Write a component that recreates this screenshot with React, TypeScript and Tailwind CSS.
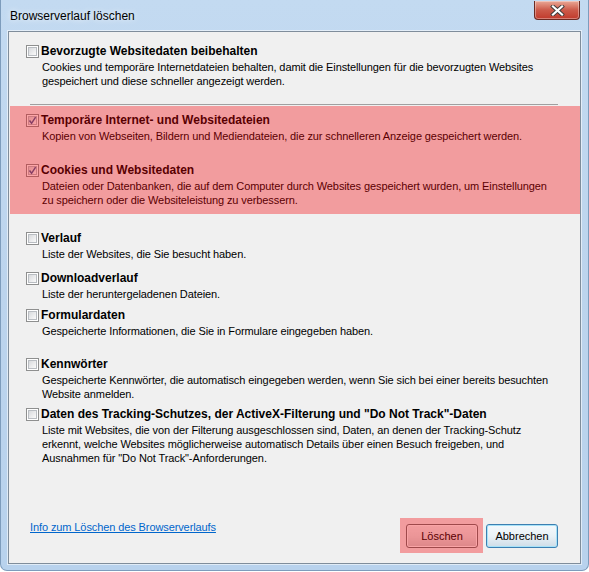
type Entry = {
  title: string;
  lines: string[];
  checked?: boolean;
  gap: string;
};

const top: Entry = {
  title: "Bevorzugte Websitedaten beibehalten",
  lines: [
    "Cookies und temporäre Internetdateien behalten, damit die Einstellungen für die bevorzugten Websites",
    "gespeichert und diese schneller angezeigt werden.",
  ],
  gap: "mt-0",
};

const marked: Entry[] = [
  {
    title: "Temporäre Internet- und Websitedateien",
    lines: ["Kopien von Webseiten, Bildern und Mediendateien, die zur schnelleren Anzeige gespeichert werden."],
    checked: true,
    gap: "mt-0",
  },
  {
    title: "Cookies und Websitedaten",
    lines: [
      "Dateien oder Datenbanken, die auf dem Computer durch Websites gespeichert wurden, um Einstellungen",
      "zu speichern oder die Websiteleistung zu verbessern.",
    ],
    checked: true,
    gap: "mt-[19px]",
  },
];

const rest: Entry[] = [
  { title: "Verlauf", lines: ["Liste der Websites, die Sie besucht haben."], gap: "mt-[16px]" },
  { title: "Downloadverlauf", lines: ["Liste der heruntergeladenen Dateien."], gap: "mt-[9px]" },
  {
    title: "Formulardaten",
    lines: ["Gespeicherte Informationen, die Sie in Formulare eingegeben haben."],
    gap: "mt-[6px]",
  },
  {
    title: "Kennwörter",
    lines: [
      "Gespeicherte Kennwörter, die automatisch eingegeben werden, wenn Sie sich bei einer bereits besuchten",
      "Website anmelden.",
    ],
    gap: "mt-[18px]",
  },
  {
    title: 'Daten des Tracking-Schutzes, der ActiveX-Filterung und "Do Not Track"-Daten',
    lines: [
      "Liste mit Websites, die von der Filterung ausgeschlossen sind, Daten, an denen der Tracking-Schutz",
      "erkennt, welche Websites möglicherweise automatisch Details über einen Besuch freigeben, und",
      'Ausnahmen für "Do Not Track"-Anforderungen.',
    ],
    gap: "mt-[5px]",
  },
];

function Box({ checked }: { checked?: boolean }) {
  return (
    <span className="relative h-[13px] w-[13px] shrink-0 border border-[#8e8f8f] bg-white">
      <span className="absolute inset-[1px] border border-[#b9bdc2] bg-gradient-to-br from-[#d8dadd] to-[#fafafa]" />
      {checked && (
        <svg className="absolute inset-0" width="11" height="11" viewBox="0 0 11 11">
          <path d="M2.5 5.5 L4.6 8.3 L8.6 2.2" fill="none" stroke="#4a5f97" strokeWidth="1.5" />
        </svg>
      )}
    </span>
  );
}

function Option({ entry }: { entry: Entry }) {
  return (
    <div className={`pl-[17px] ${entry.gap}`}>
      <div className="flex h-[16px] items-center gap-[2px] text-[12px] font-bold">
        <Box checked={entry.checked} />
        <span>{entry.title}</span>
      </div>
      <div className="mt-[1px] pl-[16px] leading-[14px] tracking-[-0.1px]">
        {entry.lines.map((l) => (
          <div key={l} className="whitespace-nowrap">
            {l}
          </div>
        ))}
      </div>
    </div>
  );
}

function CloseButton() {
  return (
    <div className="absolute right-[8px] top-[1px] flex h-[19px] w-[46px] items-center justify-center overflow-hidden rounded-b-[4px] border border-t-0 border-[#6b2a22] bg-gradient-to-b from-[#e9a897] via-[#cc5a4a] to-[#c0392b] shadow-[inset_0_0_0_1px_rgba(255,255,255,0.35)]">
      <svg width="15" height="11" viewBox="0 0 15 11">
        <path d="M3 1.5 L12 9.5 M12 1.5 L3 9.5" stroke="#3c3c3c" strokeWidth="4" strokeLinecap="square" />
        <path d="M3 1.5 L12 9.5 M12 1.5 L3 9.5" stroke="#ffffff" strokeWidth="2.2" strokeLinecap="square" />
      </svg>
    </div>
  );
}

export default function App() {
  return (
    <div className="h-[572px] w-[589px] bg-white font-['Liberation_Sans',Arial,sans-serif] text-[11px] text-black">
      <div className="relative flex h-[571px] flex-col rounded-b-[7px] border border-t-0 border-[#7d9cbc] bg-gradient-to-b from-[#c3daf1] via-[#bcd4ed] to-[#b8d2ed] px-[7px] pb-[6px]">
        <div className="flex h-[31px] items-center pl-[2px] text-[12px] [text-shadow:0_0_6px_#ffffff]">
          Browserverlauf löschen
        </div>
        <CloseButton />

        <div className="flex flex-1 flex-col border border-[#7f8d9b] bg-[#f0f0f0] shadow-[0_0_0_1px_rgba(255,255,255,0.55)]">
          <div className="pt-[11px]">
            <Option entry={top} />
          </div>
          <div className="ml-[21px] mr-[22px] mt-[16px] border-t border-[#a0a0a0]" />

          {/* highlighted selection */}
          <div className="relative mt-[1px] pb-[7px] pt-[6px]">
            {marked.map((e) => (
              <Option key={e.title} entry={e} />
            ))}
            <div className="pointer-events-none absolute inset-y-0 left-[1px] right-0 bg-[rgba(246,0,6,0.35)]" />
          </div>

          {rest.map((e) => (
            <Option key={e.title} entry={e} />
          ))}

          <div className="flex-1" />

          <div className="flex items-start justify-between pb-[15px] pl-[21px] pr-[22px]">
            <a className="-mt-[4px] leading-[14px] tracking-[-0.1px] text-[#0066cc] underline">
              Info zum Löschen des Browserverlaufs
            </a>
            <div className="flex gap-[8px]">
              <div className="relative">
                <button className="h-[24px] w-[72px] rounded-[3px] border border-[#707070] bg-gradient-to-b from-[#f2f2f2] via-[#e6e6e6] to-[#d0d0d0] shadow-[inset_0_0_0_1px_#fcfcfc]">
                  Löschen
                </button>
                <div className="pointer-events-none absolute -bottom-[5px] -left-[6px] -right-[5px] -top-[6px] bg-[rgba(246,0,6,0.35)]" />
              </div>
              <button className="h-[24px] w-[72px] rounded-[3px] border border-[#3c7fb1] bg-gradient-to-b from-[#f4f9fc] via-[#e9f1f6] to-[#cfdde7] shadow-[inset_0_0_0_1px_#a7e2f8]">
                Abbrechen
              </button>
            </div>
          </div>
        </div>
      </div>
    </div>
  );
}
